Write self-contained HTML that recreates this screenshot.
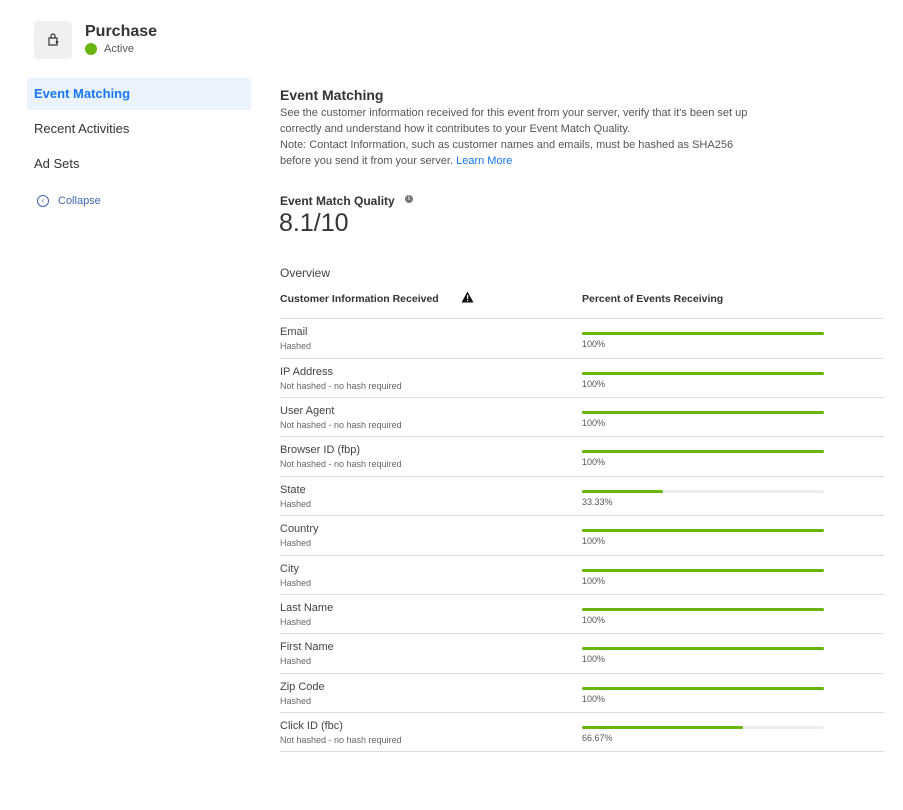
<!DOCTYPE html>
<html><head><meta charset="utf-8"><style>
*{margin:0;padding:0;box-sizing:border-box}
body{width:903px;height:810px;background:#fff;font-family:"Liberation Sans",Arial,sans-serif;color:#1c1e21;position:relative;overflow:hidden}
.abs{position:absolute}
.icon{left:34px;top:21px;width:38px;height:38px;background:#f0f0f0;border-radius:4px}
.nav{left:27px;width:224px;height:32px;font-size:13px;color:#333;padding-left:7px;line-height:32px}
.sel{background:#ebf3fe;color:#1877f2;font-weight:bold;border-radius:3px}
.row{position:absolute;left:280px;width:604px;height:40px;border-top:1px solid #dadde1}
.row .n{position:absolute;left:0;top:7px;font-size:11px;color:#444}
.row .h{position:absolute;left:0;top:22px;font-size:9px;color:#666}
.row .t{position:absolute;left:302px;top:13px;width:242px;height:3px;background:#ebedf0;border-radius:2px}
.row .f{height:3px;background:#67b50e;border-radius:2px}
.row .p{position:absolute;left:302px;top:20px;font-size:9px;color:#555}
</style></head><body>
<div class="abs icon"><svg width="38" height="38" viewBox="0 0 38 38"><path d="M15 17h8v7h-8z" fill="none" stroke="#333" stroke-width="1.2"/><path d="M17 17v-2a2 2 0 0 1 4 0v2" fill="none" stroke="#333" stroke-width="1.2"/><circle cx="23" cy="21" r="1.3" fill="#333"/></svg></div>
<div class="abs" style="left:85px;top:23px;font-size:16px;font-weight:bold;color:#333">Purchase</div>
<div class="abs" style="left:85px;top:43px;width:12px;height:12px;border-radius:50%;background:#67b50e"></div>
<div class="abs" style="left:104px;top:43px;font-size:11px;color:#555">Active</div>
<div class="abs nav sel" style="top:78px">Event Matching</div>
<div class="abs nav" style="top:113px">Recent Activities</div>
<div class="abs nav" style="top:148px">Ad Sets</div>
<div class="abs" style="left:37px;top:195px;width:12px;height:12px;border:1px solid #4267b2;border-radius:50%;font-size:8px;color:#4267b2;line-height:10px;text-align:center">‹</div>
<div class="abs" style="left:58px;top:195px;font-size:11px;color:#4267b2">Collapse</div>
<div class="abs" style="left:280px;top:87px;font-size:14px;font-weight:bold;color:#333">Event Matching</div>
<div class="abs" style="left:280px;top:105px;font-size:11px;line-height:16px;color:#555;width:500px">See the customer information received for this event from your server, verify that it's been set up<br>correctly and understand how it contributes to your Event Match Quality.<br>Note: Contact Information, such as customer names and emails, must be hashed as SHA256<br>before you send it from your server. <span style="color:#1877f2">Learn More</span></div>
<div class="abs" style="left:280px;top:194px;font-size:12px;font-weight:bold;color:#333">Event Match Quality</div>
<div class="abs" style="left:405px;top:195px;width:8px;height:8px;border-radius:50%;background:#777;color:#fff;font-size:6px;text-align:center;line-height:8px;font-weight:bold">i</div>
<div class="abs" style="left:279px;top:209px;font-size:25px;color:#333">8.1/10</div>
<div class="abs" style="left:280px;top:266px;font-size:12px;color:#444">Overview</div>
<div class="abs" style="left:280px;top:293px;font-size:10.5px;font-weight:bold;color:#333">Customer Information Received</div>
<svg class="abs" style="left:461px;top:291px" width="13" height="12" viewBox="0 0 13 12"><path d="M6.5 0.5L12.5 11.5H0.5Z" fill="#111"/><rect x="6" y="4" width="1.2" height="4" fill="#fff"/><rect x="6" y="9" width="1.2" height="1.2" fill="#fff"/></svg>
<div class="abs" style="left:582px;top:293px;font-size:10.5px;font-weight:bold;color:#333">Percent of Events Receiving</div>
<div class="row" style="top:318px"><div class="n">Email</div><div class="h">Hashed</div><div class="t"><div class="f" style="width:100%"></div></div><div class="p">100%</div></div>
<div class="row" style="top:358px"><div class="n">IP Address</div><div class="h">Not hashed - no hash required</div><div class="t"><div class="f" style="width:100%"></div></div><div class="p">100%</div></div>
<div class="row" style="top:397px"><div class="n">User Agent</div><div class="h">Not hashed - no hash required</div><div class="t"><div class="f" style="width:100%"></div></div><div class="p">100%</div></div>
<div class="row" style="top:436px"><div class="n">Browser ID (fbp)</div><div class="h">Not hashed - no hash required</div><div class="t"><div class="f" style="width:100%"></div></div><div class="p">100%</div></div>
<div class="row" style="top:476px"><div class="n">State</div><div class="h">Hashed</div><div class="t"><div class="f" style="width:33.33%"></div></div><div class="p">33.33%</div></div>
<div class="row" style="top:515px"><div class="n">Country</div><div class="h">Hashed</div><div class="t"><div class="f" style="width:100%"></div></div><div class="p">100%</div></div>
<div class="row" style="top:555px"><div class="n">City</div><div class="h">Hashed</div><div class="t"><div class="f" style="width:100%"></div></div><div class="p">100%</div></div>
<div class="row" style="top:594px"><div class="n">Last Name</div><div class="h">Hashed</div><div class="t"><div class="f" style="width:100%"></div></div><div class="p">100%</div></div>
<div class="row" style="top:633px"><div class="n">First Name</div><div class="h">Hashed</div><div class="t"><div class="f" style="width:100%"></div></div><div class="p">100%</div></div>
<div class="row" style="top:673px"><div class="n">Zip Code</div><div class="h">Hashed</div><div class="t"><div class="f" style="width:100%"></div></div><div class="p">100%</div></div>
<div class="row" style="top:712px;height:40px;border-bottom:1px solid #dadde1"><div class="n">Click ID (fbc)</div><div class="h">Not hashed - no hash required</div><div class="t"><div class="f" style="width:66.67%"></div></div><div class="p">66.67%</div></div>
</body></html>
